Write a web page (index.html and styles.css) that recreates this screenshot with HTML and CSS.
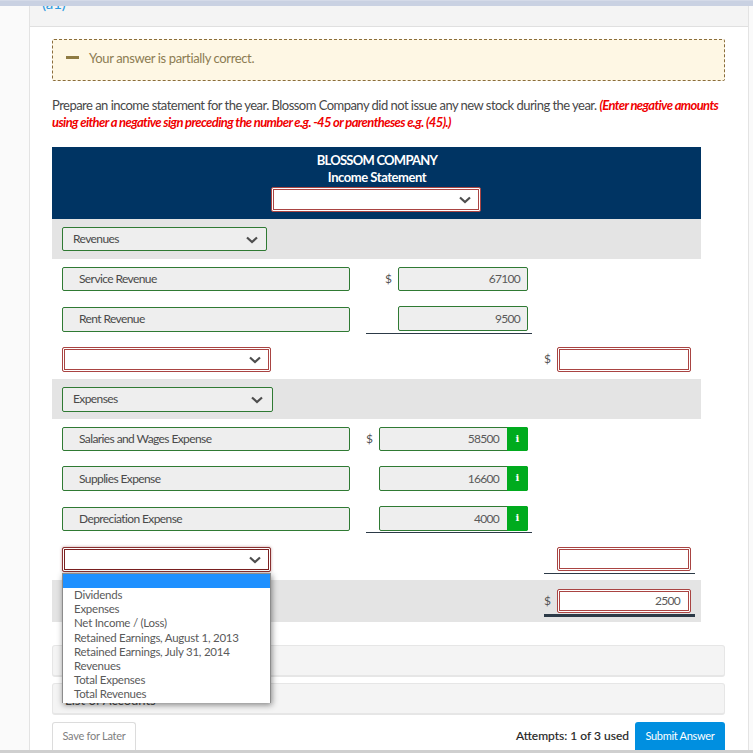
FILE: index.html
```html
<!DOCTYPE html>
<html lang="en">
<head>
<meta charset="utf-8">
<title>Income Statement</title>
<link rel="stylesheet" href="styles.css">
</head>
<body>
<div class="topbar"></div>
<div class="page">
  <main class="panel">
    <div class="strip"><a class="strip-link">(a1)</a></div>
    <div class="content">
      <div class="alert"><span class="minus"></span><span class="alert-text">Your answer is partially correct.</span></div>
      <p class="prompt">Prepare an income statement for the year. Blossom Company did not issue any new stock during the year. <em>(Enter negative amounts using either a negative sign preceding the number e.g. -45 or parentheses e.g. (45).)</em></p>
      <section class="sheet">
        <header class="sheet-head">
          <div class="title">BLOSSOM COMPANY</div>
          <div class="subtitle">Income Statement</div>
          <div class="sel bad head-sel"><svg class="chev" viewBox="0 0 12 8"><path d="M1 1.5l5 4.5 5-4.5"/></svg></div>
        </header>

        <div class="row shade">
          <div class="sel good w205"><span>Revenues</span><svg class="chev" viewBox="0 0 12 8"><path d="M1 1.5l5 4.5 5-4.5"/></svg></div>
        </div>
        <div class="row">
          <div class="label short">Service Revenue</div>
          <div class="cell"><span class="cur">$</span><div class="num good w130">67100</div></div>
        </div>
        <div class="row">
          <div class="label high">Rent Revenue</div>
          <div class="cell line deep"><div class="num good w130 tall nudge">9500</div></div>
        </div>
        <div class="row">
          <div class="sel bad w209 span2"><svg class="chev" viewBox="0 0 12 8"><path d="M1 1.5l5 4.5 5-4.5"/></svg></div>
          <div class="cell total"><span class="cur">$</span><div class="num bad w134 tall"></div></div>
        </div>
        <div class="row shade">
          <div class="sel good w211"><span>Expenses</span><svg class="chev" viewBox="0 0 12 8"><path d="M1 1.5l5 4.5 5-4.5"/></svg></div>
        </div>
        <div class="row">
          <div class="label short">Salaries and Wages Expense</div>
          <div class="cell"><span class="cur">$</span><div class="num good w149 info">58500<b class="i">i</b></div></div>
        </div>
        <div class="row up">
          <div class="label">Supplies Expense</div>
          <div class="cell"><div class="num good w149 info tall">16600<b class="i">i</b></div></div>
        </div>
        <div class="row">
          <div class="label short">Depreciation Expense</div>
          <div class="cell line"><div class="num good w149 info tall nudge">4000<b class="i">i</b></div></div>
        </div>
        <div class="row last">
          <div class="sel bad w209 span2 open"><svg class="chev" viewBox="0 0 12 8"><path d="M1 1.5l5 4.5 5-4.5"/></svg></div>
          <div class="cell total line deep"><div class="num bad w134"></div></div>
          <ul class="menu">
            <li class="hl">&nbsp;</li>
            <li>Dividends</li>
            <li>Expenses</li>
            <li>Net Income / (Loss)</li>
            <li>Retained Earnings, August 1, 2013</li>
            <li>Retained Earnings, July 31, 2014</li>
            <li>Revenues</li>
            <li>Total Expenses</li>
            <li>Total Revenues</li>
          </ul>
        </div>
        <div class="row shade grand">
          <div class="cell total line2"><span class="cur">$</span><div class="num bad w134">2500</div></div>
        </div>
      </section>

      <div class="fold first"></div>
      <div class="fold"><span>List of Accounts</span></div>

      <footer class="foot">
        <button class="later">Save for Later</button>
        <div class="foot-right">
          <span class="attempts">Attempts: 1 of 3 used</span>
          <button class="submit">Submit Answer</button>
        </div>
      </footer>
    </div>
  </main>
</div>
<div class="bottombar"></div>
</body>
</html>
```

FILE: styles.css
```css
* { box-sizing: border-box; }
html, body { margin: 0; height: 753px; overflow: hidden; }
body {
  display: flex;
  flex-direction: column;
  background: #fafafa;
  font-family: Lato, "Liberation Sans", sans-serif;
  font-size: 12px;
  color: #4a4a4a;
}
.topbar { flex: 0 0 6px; background: #c9d1e2; border-top: 1px solid #d4dae8; }
.page { flex: 1 1 auto; min-height: 0; padding: 0 4px 0 29px; overflow: hidden; }
.panel { height: 100%; background: #fff; border-left: 1px solid #e3e3e3; border-right: 1px solid #e3e3e3; }
.bottombar { flex: 0 0 3px; background: #cfcfcf; }

.strip { height: 21px; background: #f4f4f4; border-bottom: 1px solid #e0e0e0; padding-left: 12px; overflow: hidden; }
.strip-link { display: block; margin-top: -11px; font-size: 15px; line-height: 16px; color: #2d9be0; }

.content { padding: 12px 23px 0 22px; }

.alert {
  height: 42px;
  display: flex;
  align-items: center;
  gap: 10px;
  padding-left: 13px;
  background: #fef7e4;
  border: 1px dashed #8a6d3b;
  border-radius: 2px;
  font-size: 13px;
  letter-spacing: -0.37px;
  color: #8c7c52;
}
.alert-text { margin-top: -4px; }
.minus { width: 13px; height: 3px; background: #8f7b42; margin-top: -5px; }

.prompt {
  margin: 16px 0 0;
  width: 673px;
  font-size: 13px;
  line-height: 17px;
  letter-spacing: -0.53px;
  color: #484848;
}
.prompt em { font-weight: 700; letter-spacing: -0.62px; color: #f00000; }

.sheet { width: 649px; margin-top: 16px; }
.sheet-head { height: 72px; background: #003463; color: #fff; display: flex; flex-direction: column; align-items: center; padding-top: 5px; padding-left: 1px; }
.title { font-weight: 700; font-size: 13px; line-height: 16px; letter-spacing: -0.75px; }
.subtitle { font-weight: 700; font-size: 13px; line-height: 18px; letter-spacing: -0.45px; }

.row {
  position: relative;
  height: 40px;
  display: grid;
  grid-template-columns: 288px 166px 151px;
  column-gap: 16px;
  padding-left: 10px;
  align-items: start;
  padding-top: 8px;
}
.row.up { padding-top: 7px; }
.row.shade { background: #e4e4e4; }
.row.last { height: 41px; }
.row.grand { height: 42px; padding-top: 9px; }

.label, .sel, .num { border-radius: 2px; letter-spacing: -0.6px; }
.label {
  height: 25px;
  padding-left: 16px;
  line-height: 23px;
  background: #eee;
  border: 1px solid #2f7a33;
}
.label.short { height: 24px; line-height: 22px; }
.label.high { line-height: 21px; }

.sel { position: relative; height: 25px; line-height: 21px; }
.sel span { padding-left: 10px; }
.good { background: #eee; border: 1px solid #2f7a33; }
.bad { background: #fff; border: 1px solid #a94442; box-shadow: inset 0 0 0 1px #fff, inset 0 0 0 2px #a94442; }
.chev { position: absolute; right: 9px; top: 8px; width: 12px; height: 8px; fill: none; stroke: #4e4e4e; stroke-width: 2.2; }
.head-sel { flex: none; width: 210px; margin-top: 1px; margin-left: -2px; }
.w205 { width: 205px; height: 24px; }
.w205 .chev { right: 8px; }
.w209 { width: 209px; }
.w211 { width: 211px; }
.span2 { grid-column: 1 / 3; }
.open { box-shadow: inset 0 0 0 1px #fff, inset 0 0 0 2px #7a2020, 0 0 3px rgba(120,30,30,.45); border-color: #8a3030; }

.cell { display: flex; justify-content: flex-end; align-items: flex-start; height: 26px; padding-right: 4px; }
.cell.line { border-bottom: 1px solid #2c3a47; }
.cell.deep { height: 27px; }
.cell.total { grid-column: 3; width: 151px; margin-left: -4px; column-gap: 6px; }
.line2 { border-bottom: 3px solid #2c3a47; height: 28px; }
.cur { width: 7px; margin-right: 6px; line-height: 24px; font-size: 12px; color: #555; }
.total .cur { margin-right: 0; }

.num { height: 24px; line-height: 22px; text-align: right; padding-right: 7px; letter-spacing: -0.7px; color: #5a5a5a; position: relative; }
.tall { height: 25px; line-height: 23px; }
.nudge { margin-top: -1px; }
.w130 { width: 130px; }
.w134 { width: 134px; padding-right: 10px; }
.w149 { width: 149px; }
.info { padding-right: 28px; }
.i {
  position: absolute;
  right: -1px; top: -1px; bottom: -1px;
  width: 21px;
  background: #00ab1e;
  border-radius: 0 2px 2px 0;
  color: #fff;
  text-align: center;
  font-family: "DejaVu Serif", serif;
  font-size: 10px;
  line-height: 24px;
  letter-spacing: 0;
}

.menu {
  position: absolute;
  left: 10px; top: 34px;
  width: 209px;
  height: 130px;
  margin: 0;
  padding: 1px 1px 0;
  list-style: none;
  background: #fff;
  border: 1px solid #8c8c8c;
  border-bottom: 0;
  overflow: hidden;
  box-shadow: 1px 2px 6px rgba(0,0,0,.45);
  z-index: 2;
  font-size: 11.5px;
  line-height: 14.2px;
  letter-spacing: -0.25px;
  color: #5a5a5a;
}
.menu li { padding-left: 10px; }
.menu li.hl { background: #1e90ff; height: 14px; margin: -1px -1px 0; }

.fold {
  height: 32px;
  margin-top: 6px;
  background: #f4f4f4;
  border: 1px solid #e6e6e6;
  border-bottom-width: 2px;
  border-radius: 3px;
  padding-left: 12px;
  line-height: 32px;
  font-size: 13px;
  overflow: hidden;
}
.fold.first { margin-top: 23px; }

.foot { display: flex; justify-content: space-between; margin-top: 7px; height: 28px; }
.later {
  width: 84px;
  height: 28px;
  background: #fff;
  border: 1px solid #dcdcdc;
  border-bottom: 0;
  border-radius: 3px 3px 0 0;
  font: 11px Lato, sans-serif;
  letter-spacing: -0.25px;
  color: #808080;
  padding: 0 0 2px;
}
.foot-right { display: flex; align-items: center; gap: 6px; }
.attempts { font-size: 12px; margin-top: -2px; color: #222; -webkit-text-stroke: 0.15px #222; }
.submit {
  width: 90px;
  height: 28px;
  background: #008fe0;
  border: 0;
  border-radius: 3px 3px 0 0;
  color: #fff;
  font: 11px Lato, sans-serif;
  letter-spacing: -0.3px;
  padding: 0 0 2px;
}
```
